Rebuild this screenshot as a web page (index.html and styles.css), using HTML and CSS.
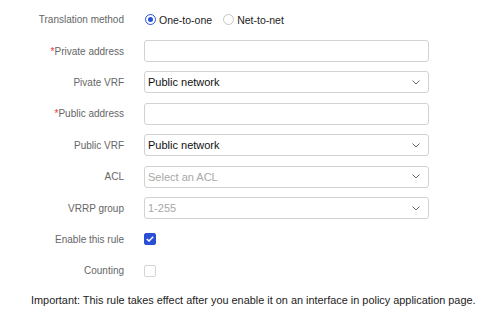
FILE: index.html
```html
<!DOCTYPE html>
<html lang="en">
<head>
    <meta charset="UTF-8">
    <title>Static NAT rule</title>
    <link rel="stylesheet" href="styles.css">
</head>
<body>

    <!-- Formulario da regra -->
    <div class="form">
        <div class="row">
            <label class="label">Translation method</label>
            <div class="control radios">
                <span class="radio on"></span><span class="opt">One-to-one</span>
                <span class="radio"></span><span class="opt">Net-to-net</span>
            </div>
        </div>

        <div class="row">
            <label class="label"><span class="req">*</span>Private address</label>
            <div class="control"><div class="input"></div></div>
        </div>

        <div class="row">
            <label class="label">Pivate VRF</label>
            <div class="control">
                <div class="input select">
                    <span class="value">Public network</span>
                    <svg class="arrow" width="8" height="5" viewBox="0 0 8 5"><path d="M0.5 0.5 L4 4 L7.5 0.5" fill="none" stroke="#666" stroke-width="1"/></svg>
                </div>
            </div>
        </div>

        <div class="row">
            <label class="label"><span class="req">*</span>Public address</label>
            <div class="control"><div class="input"></div></div>
        </div>

        <div class="row">
            <label class="label">Public VRF</label>
            <div class="control">
                <div class="input select">
                    <span class="value">Public network</span>
                    <svg class="arrow" width="8" height="5" viewBox="0 0 8 5"><path d="M0.5 0.5 L4 4 L7.5 0.5" fill="none" stroke="#666" stroke-width="1"/></svg>
                </div>
            </div>
        </div>

        <div class="row">
            <label class="label">ACL</label>
            <div class="control">
                <div class="input select">
                    <span class="value empty">Select an ACL</span>
                    <svg class="arrow" width="8" height="5" viewBox="0 0 8 5"><path d="M0.5 0.5 L4 4 L7.5 0.5" fill="none" stroke="#666" stroke-width="1"/></svg>
                </div>
            </div>
        </div>

        <div class="row">
            <label class="label">VRRP group</label>
            <div class="control">
                <div class="input select">
                    <span class="value empty">1-255</span>
                    <svg class="arrow" width="8" height="5" viewBox="0 0 8 5"><path d="M0.5 0.5 L4 4 L7.5 0.5" fill="none" stroke="#666" stroke-width="1"/></svg>
                </div>
            </div>
        </div>

        <div class="row">
            <label class="label">Enable this rule</label>
            <div class="control">
                <span class="check on">
                    <svg width="8" height="6" viewBox="0 0 8 6"><path d="M0.8 3 L3 5 L7.2 0.8" fill="none" stroke="#fff" stroke-width="1.5"/></svg>
                </span>
            </div>
        </div>

        <div class="row">
            <label class="label">Counting</label>
            <div class="control"><span class="check"></span></div>
        </div>

        <p class="note">Important: This rule takes effect after you enable it on an interface in policy application page.</p>
    </div>

</body>
</html>
```

FILE: styles.css
```css
body {
    margin: 0;
    background-color: #fff;
    font-family: 'Liberation Sans', Arial, sans-serif;
    color: #333;
}

.form {
    padding-top: 4px;
}

.row {
    display: grid;
    grid-template-columns: 124px 285px;
    column-gap: 20px;
    align-items: center;
    height: 31.4px;
}

.label {
    text-align: right;
    font-size: 10px;
    color: #666;
}

.req {
    color: #e0383c;
}

.control {
    display: flex;
    align-items: center;
}

/* Radios */
.radios .radio {
    width: 11px;
    height: 11px;
    border: 1px solid #c4c4c4;
    border-radius: 50%;
    box-sizing: border-box;
    margin-left: 1px;
    position: relative;
}

.radios .radio.on {
    border-color: #2850d8;
}

.radios .radio.on::after {
    content: "";
    position: absolute;
    left: 2px;
    top: 2px;
    width: 5px;
    height: 5px;
    border-radius: 50%;
    background-color: #2850d8;
}

.opt {
    font-size: 10.5px;
    color: #222;
    margin-left: 3px;
    margin-right: 10px;
}

/* Campos */
.input {
    width: 285px;
    height: 22px;
    border: 1px solid #d2d2d2;
    border-radius: 3px;
    box-sizing: border-box;
    display: flex;
    align-items: center;
    justify-content: space-between;
    padding: 0 8px 0 3px;
}

.value {
    font-size: 11px;
    color: #111;
}

.value.empty {
    color: #a8a8a8;
}

/* Checkboxes */
.check {
    width: 12px;
    height: 12px;
    box-sizing: border-box;
    border: 1px solid #d4d4d4;
    border-radius: 2px;
    display: flex;
    align-items: center;
    justify-content: center;
}

.check.on {
    background-color: #2a4fd6;
    border-color: #2a4fd6;
}

.note {
    margin: 7px 0 0 31px;
    font-size: 10.9px;
    color: #222;
}
```
